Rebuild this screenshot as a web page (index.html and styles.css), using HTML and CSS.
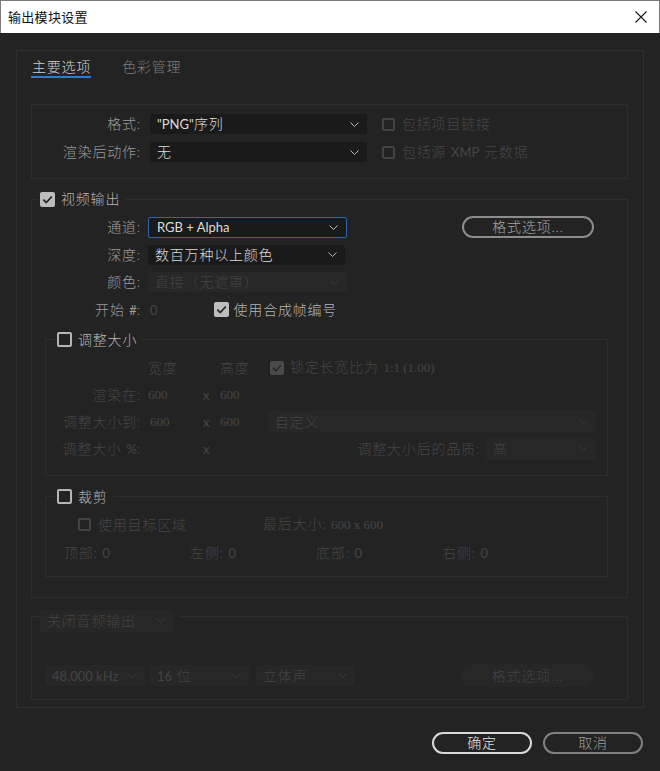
FILE: index.html
```html
<!DOCTYPE html>
<html lang="zh-CN">
<head>
<meta charset="utf-8">
<title>输出模块设置</title>
<link rel="stylesheet" href="styles.css">
</head>
<body>
<div class="window">
  <header class="titlebar">
    <span class="title">输出模块设置</span>
    <svg class="close" width="12" height="12" viewBox="0 0 12 12" aria-hidden="true"><path d="M0.5 0.5L11.5 11.5M11.5 0.5L0.5 11.5" stroke="#1a1a1a" stroke-width="1.1" fill="none"/></svg>
  </header>

  <main class="content">
    <div class="panel">
      <nav class="tabs">
        <span class="tab active">主要选项</span>
        <span class="tab">色彩管理</span>
      </nav>

      <section class="box fmt">
        <div class="frow">
          <span class="lbl">格式:</span>
          <div class="select sel-fmt"><span class="val"><span class="lat">"PNG"</span>序列</span><svg class="chev" width="9" height="5" viewBox="0 0 9 5"><polyline points="0.5,0.5 4.5,4.5 8.5,0.5" fill="none" stroke="#bdbdbd"/></svg></div>
          <span class="cb off dim"></span>
          <span class="dimtext">包括项目链接</span>
        </div>
        <div class="frow">
          <span class="lbl">渲染后动作:</span>
          <div class="select sel-fmt"><span class="val">无</span><svg class="chev" width="9" height="5" viewBox="0 0 9 5"><polyline points="0.5,0.5 4.5,4.5 8.5,0.5" fill="none" stroke="#bdbdbd"/></svg></div>
          <span class="cb off dim"></span>
          <span class="dimtext">包括源 <span class="lat">XMP</span> 元数据</span>
        </div>
      </section>

      <fieldset class="video">
        <legend class="leg-video"><span class="leg"><span class="cb on"><svg width="15" height="15" viewBox="0 0 15 15"><path d="M3.3 7.6L6.2 10.5L11.8 4.6" fill="none" stroke="#2a2a2a" stroke-width="1.8"/></svg></span><span class="legtext">视频输出</span></span></legend>

        <div class="vrows">
          <div class="vrow">
            <span class="lbl">通道:</span>
            <div class="select sel-ch focus"><span class="val lat">RGB + Alpha</span><svg class="chev" width="9" height="5" viewBox="0 0 9 5"><polyline points="0.5,0.5 4.5,4.5 8.5,0.5" fill="none" stroke="#bdbdbd"/></svg></div>
            <button class="pill opt">格式选项...</button>
          </div>
          <div class="vrow">
            <span class="lbl">深度:</span>
            <div class="select sel-depth"><span class="val">数百万种以上颜色</span><svg class="chev" width="9" height="5" viewBox="0 0 9 5"><polyline points="0.5,0.5 4.5,4.5 8.5,0.5" fill="none" stroke="#bdbdbd"/></svg></div>
          </div>
          <div class="vrow">
            <span class="lbl">颜色:</span>
            <div class="select sel-ch disabled"><span class="val">直接（无遮罩）</span><svg class="chev" width="9" height="5" viewBox="0 0 9 5"><polyline points="0.5,0.5 4.5,4.5 8.5,0.5" fill="none" stroke="#3a3a3a"/></svg></div>
          </div>
          <div class="vrow">
            <span class="lbl">开始 <span class="lat">#</span>:</span>
            <span class="dimtext start0 lat">0</span>
            <span class="cb on framecb"><svg width="15" height="15" viewBox="0 0 15 15"><path d="M3.3 7.6L6.2 10.5L11.8 4.6" fill="none" stroke="#2a2a2a" stroke-width="1.8"/></svg></span>
            <span class="cbtext">使用合成帧编号</span>
          </div>
        </div>

        <fieldset class="sub resize">
          <legend class="leg-sub"><span class="leg"><span class="cb off"></span><span class="legtext">调整大小</span></span></legend>
          <div class="rgrid">
            <span></span>
            <span class="dimtext">宽度</span>
            <span></span>
            <span class="dimtext c-h">高度</span>
            <span class="rest lock"><span class="cb on dimon"><svg width="14" height="14" viewBox="0 0 15 15"><path d="M3.3 7.6L6.2 10.5L11.8 4.6" fill="none" stroke="#2a2a2a" stroke-width="1.8"/></svg></span><span class="dimtext">锁定长宽比为 <span class="serif">1:1 (1.00)</span></span></span>

            <span class="lbl dimlbl">渲染在:</span>
            <span class="dimtext serif">600</span>
            <span class="dimtext x lat">x</span>
            <span class="dimtext serif c-h">600</span>
            <span></span>

            <span class="lbl dimlbl">调整大小到:</span>
            <span class="dimtext serif v2">600</span>
            <span class="dimtext x lat">x</span>
            <span class="dimtext serif c-h">600</span>
            <span class="rest"><span class="select disabled sel-custom"><span class="val">自定义</span><svg class="chev" width="9" height="5" viewBox="0 0 9 5"><polyline points="0.5,0.5 4.5,4.5 8.5,0.5" fill="none" stroke="#3a3a3a"/></svg></span></span>

            <span class="lbl dimlbl">调整大小 <span class="lat">%</span>:</span>
            <span></span>
            <span class="dimtext x lat">x</span>
            <span></span>
            <span class="rest quality"><span class="dimtext">调整大小后的品质:</span><span class="select disabled sel-q"><span class="val">高</span><svg class="chev" width="9" height="5" viewBox="0 0 9 5"><polyline points="0.5,0.5 4.5,4.5 8.5,0.5" fill="none" stroke="#3a3a3a"/></svg></span></span>
          </div>
        </fieldset>

        <fieldset class="sub crop">
          <legend class="leg-sub"><span class="leg"><span class="cb off"></span><span class="legtext">裁剪</span></span></legend>
          <div class="crow1">
            <span class="target"><span class="cb off dim"></span><span class="dimtext">使用目标区域</span></span>
            <span class="dimtext">最后大小: <span class="serif">600 x 600</span></span>
          </div>
          <div class="crow2">
            <span class="dimtext">顶部: <span class="lat">0</span></span>
            <span class="dimtext">左侧: <span class="lat">0</span></span>
            <span class="dimtext">底部: <span class="lat">0</span></span>
            <span class="dimtext">右侧: <span class="lat">0</span></span>
          </div>
        </fieldset>
      </fieldset>

      <fieldset class="audio">
        <legend class="leg-audio"><span class="select disabled sel-audio"><span class="val">关闭音频输出</span><svg class="chev" width="9" height="5" viewBox="0 0 9 5"><polyline points="0.5,0.5 4.5,4.5 8.5,0.5" fill="none" stroke="#3a3a3a"/></svg></span></legend>
        <div class="arow">
          <span class="select disabled sel-a1"><span class="val lat">48.000 kHz</span><svg class="chev" width="9" height="5" viewBox="0 0 9 5"><polyline points="0.5,0.5 4.5,4.5 8.5,0.5" fill="none" stroke="#3a3a3a"/></svg></span>
          <span class="select disabled sel-a2"><span class="val"><span class="lat">16</span> 位</span><svg class="chev" width="9" height="5" viewBox="0 0 9 5"><polyline points="0.5,0.5 4.5,4.5 8.5,0.5" fill="none" stroke="#3a3a3a"/></svg></span>
          <span class="select disabled sel-a3"><span class="val">立体声</span><svg class="chev" width="9" height="5" viewBox="0 0 9 5"><polyline points="0.5,0.5 4.5,4.5 8.5,0.5" fill="none" stroke="#3a3a3a"/></svg></span>
          <button class="pill opt dis-pill">格式选项...</button>
        </div>
      </fieldset>
    </div>

    <div class="actions">
      <button class="pill ok">确定</button>
      <button class="pill cancel">取消</button>
    </div>
  </main>
</div>
</body>
</html>
```

FILE: styles.css
```css
* { box-sizing: border-box; }
html, body { margin: 0; padding: 0; }
body {
  width: 660px;
  height: 771px;
  overflow: hidden;
  background: #232323;
  font-family: "Lato", "Noto Sans CJK SC", sans-serif;
  font-size: 14px;
  font-weight: 300;
  letter-spacing: 0.8px;
  line-height: 18px;
}

.lat { font-family: "Lato", sans-serif; font-size: 13px; letter-spacing: 0; font-weight: 400; }
.serif { font-family: "Liberation Serif", serif; font-size: 13px; letter-spacing: 0; font-weight: 400; }

/* title bar */
.titlebar {
  height: 33px;
  background: #ffffff;
  border: 1px solid #7a7a7a;
  border-bottom: none;
  display: flex;
  align-items: center;
  justify-content: space-between;
  padding: 0 12px 0 7px;
}
.title {
  font-family: "Noto Sans CJK SC", sans-serif;
  font-size: 13px;
  font-weight: 400;
  letter-spacing: 0.3px;
  color: #111;
}

/* main */
.content { padding: 17px 16px 0 16px; }
.panel {
  height: 658px;
  border: 1px solid #303030;
  padding: 0 15px 0 14px;
}

.tabs { display: flex; gap: 30px; padding-top: 7px; }
.tab {
  line-height: 18px;
  border-bottom: 2px solid transparent;
  color: #7c7c7c;
  padding-left: 1px;
}
.tab.active { color: #cfcfcf; border-bottom-color: #2c7bd6; }

.box { border: 1px solid #2d2d2d; }
.fmt { margin-top: 26px; padding: 9px 0 16px 0; display: flex; flex-direction: column; gap: 8px; }
.frow { display: flex; align-items: center; height: 20px; }

.lbl {
  width: 109px;
  text-align: right;
  color: #9b9b9b;
  white-space: nowrap;
}
.dimlbl { color: #464646; }

.select {
  display: flex;
  align-items: center;
  justify-content: space-between;
  height: 20px;
  padding: 0 8px 0 7px;
  background: #1a1a1a;
  color: #dcdcdc;
  border-radius: 2px;
  white-space: nowrap;
}
.select.focus { border: 1px solid #2d69aa; height: 21px; padding-left: 8px; }
.select.disabled { background: #272727; color: #444444; }
.chev { flex: none; }

.sel-fmt { width: 217px; margin-left: 9px; }
.frow .cb { margin-left: 15px; }
.frow .dimtext { margin-left: 7px; }

.dimtext { color: #464646; white-space: nowrap; }
.cbtext { color: #b5b5b5; white-space: nowrap; }

/* checkboxes */
.cb {
  display: inline-flex;
  align-items: center;
  justify-content: center;
  flex: none;
  width: 15px;
  height: 15px;
  border-radius: 2px;
}
.cb svg { display: block; }
.cb.on { background: #bdbdbd; }
.cb.off { border: 2px solid #b5b5b5; }
.cb.dim { width: 13px; height: 13px; border: 2px solid #434343; }
.cb.dimon { width: 14px; height: 14px; background: #4a4a4a; }

/* fieldsets */
fieldset { margin: 0; padding: 0; border: 1px solid #2d2d2d; min-width: 0; }
legend { padding: 0 5px 0 2px; line-height: 18px; }
.leg { display: flex; align-items: center; gap: 6px; height: 18px; }
.legtext { color: #b5b5b5; line-height: 18px; }

.video { margin-top: 11px; padding: 0 0 20px 0; }
.leg-video { margin-left: 6px; }

.vrows { padding-top: 8px; display: flex; flex-direction: column; gap: 5.5px; }
.vrow { display: flex; align-items: center; height: 22px; }
.vrow .select { margin-left: 7px; }
.sel-ch { width: 199px; }
.sel-depth { width: 197px; }
.opt { margin-left: 115px; width: 132px; }
.start0 { margin-left: 9px; }
.framecb { margin-left: 56px; }
.vrow .cbtext { margin-left: 5px; }

.sub { margin: 10px 19px 0 13px; }
.leg-sub { margin-left: 9px; }

.resize { padding: 8px 0 15px 0; }
.rgrid {
  display: grid;
  grid-template-columns: 102px 54px 16px 50px 1fr;
  grid-auto-rows: 22px;
  row-gap: 5px;
  align-items: center;
}
.rgrid .lbl { width: auto; padding-right: 7px; }
.rgrid .v2 { padding-left: 2px; }
.rgrid .x { padding-left: 1px; }
.rgrid .c-h { padding-left: 2px; }
.rest { display: flex; align-items: center; padding-right: 11px; height: 22px; }
.lock { padding-left: 2px; gap: 6px; }
.sel-custom { width: 100%; height: 21px; }
.quality { justify-content: flex-end; gap: 6px; }
.sel-q { width: 110px; height: 22px; }

.crop { margin-top: 12px; padding: 8px 0 12px 0; }
.crow1 {
  display: grid;
  grid-template-columns: 217px 1fr;
  align-items: center;
  height: 22px;
}
.target { display: flex; align-items: center; gap: 7px; padding-left: 32px; }
.crow2 {
  margin-top: 6px;
  display: grid;
  grid-template-columns: repeat(4, 126px);
  align-items: center;
  height: 22px;
  padding-left: 18px;
}

/* audio */
.audio { margin-top: 12px; padding: 41px 0 12px 0; }
.leg-audio { margin-left: 8px; padding: 0 7px 0 0; height: 14px; }
.sel-audio { width: 133px; height: 22px; }
.arow { display: flex; align-items: center; height: 22px; padding-left: 13px; }
.sel-a1 { width: 100px; height: 21px; }
.sel-a2 { width: 99px; height: 21px; margin-left: 5px; }
.sel-a3 { width: 99px; height: 21px; margin-left: 7px; }
.arow .opt { margin-left: 106px; width: 133px; }

/* pill buttons */
.pill {
  height: 22px;
  border-radius: 11px;
  border: 2px solid #8c8c8c;
  background: transparent;
  color: #a6a6a6;
  font-family: "Lato", "Noto Sans CJK SC", sans-serif;
  font-size: 14px;
  font-weight: 300;
  letter-spacing: 0.8px;
  padding: 0;
  display: flex;
  align-items: center;
  justify-content: center;
  line-height: 1;
}
.dis-pill { border: none; background: #272727; color: #444444; height: 23px; }

.actions {
  margin-top: 24px;
  display: flex;
  justify-content: flex-end;
  gap: 11px;
  padding-right: 1px;
}
.ok { width: 100px; border-color: #d9d9d9; color: #e2e2e2; }
.cancel { width: 100px; border-color: #808080; color: #9a9a9a; }
```
